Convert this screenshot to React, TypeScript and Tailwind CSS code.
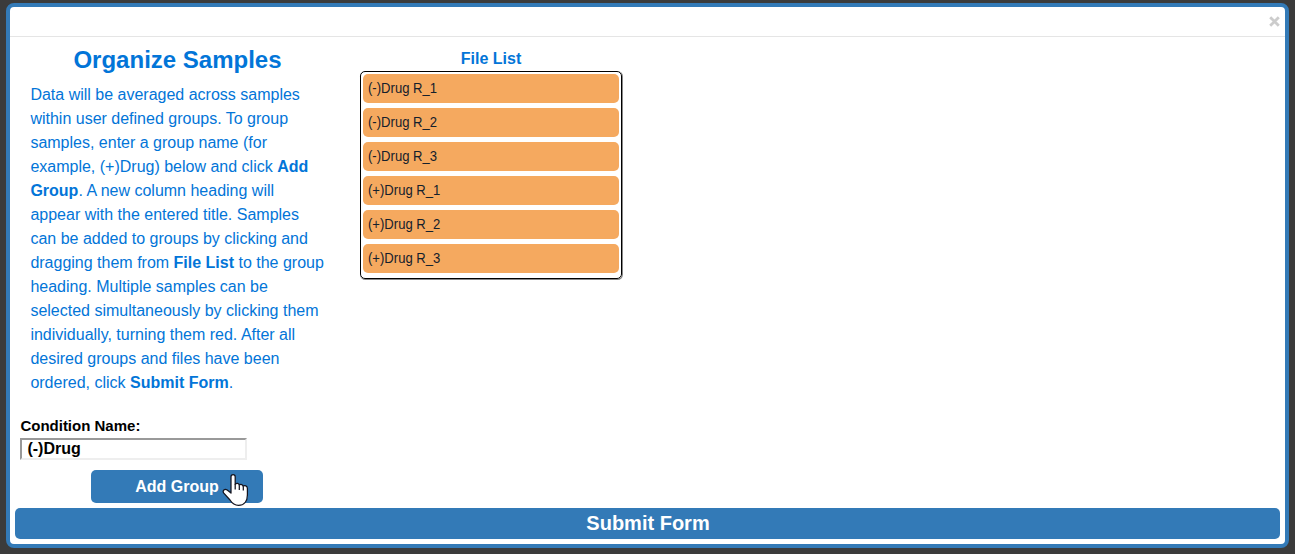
import React from "react";

const files = ["(-)Drug R_1", "(-)Drug R_2", "(-)Drug R_3", "(+)Drug R_1", "(+)Drug R_2", "(+)Drug R_3"];

function Instructions() {
  return (
    <section className="w-[330px] text-[#0275d8]">
      <h2 className="mt-[7px] pl-[13px] pr-2 text-center text-[24px] leading-8 font-bold">Organize Samples</h2>
      <p className="mt-[7px] pl-[20.4px] text-[16px] leading-6 whitespace-nowrap">
        Data will be averaged across samples<br />
        within user defined groups. To group<br />
        samples, enter a group name (for<br />
        example, (+)Drug) below and click <b>Add</b><br />
        <b>Group</b>. A new column heading will<br />
        appear with the entered title. Samples<br />
        can be added to groups by clicking and<br />
        dragging them from <b>File List</b> to the group<br />
        heading. Multiple samples can be<br />
        selected simultaneously by clicking them<br />
        individually, turning them red. After all<br />
        desired groups and files have been<br />
        ordered, click <b>Submit Form</b>.
      </p>
    </section>
  );
}

function FileList() {
  return (
    <section className="ml-[20px] w-[262px]">
      <h3 className="mt-[10px] text-center text-[16px] leading-6 font-bold text-[#0275d8]">File List</h3>
      <ul className="flex h-[208px] flex-col gap-[5px] rounded-[5px] border border-black p-[2px] shadow-[0.5px_0.5px_0_0.5px_#888]">
        {files.map((name) => (
          <li key={name} className="h-[29px] shrink-0 rounded-[5px] bg-[#f5a95f] pl-[5px] text-[14px] leading-[29px] text-[#14202c]">
            <span className="inline-block origin-left scale-x-[0.935]">{name}</span>
          </li>
        ))}
      </ul>
    </section>
  );
}

function HandCursor() {
  return (
    <svg className="absolute top-[3px] left-[131px]" width="28" height="34" viewBox="0 0 28 34" fill="white" stroke="#14141f" strokeWidth="1.25" strokeLinejoin="round">
      <path d="M9 19V3.8C9 .8 13.2.8 13.2 3.8V11.2C14.4 9.8 17.1 10.1 17.3 12.1C18.7 10.9 20.9 11.5 21.1 13.1C22.8 12.1 25.4 12.9 25.4 15.4V22C25.4 28.6 21.8 32.4 16.5 32.4C12.1 32.4 9.9 30 8 27L1.8 20.1C0 17.6 2.7 15.4 5.2 17L9 20.1Z" />
      <path d="M13.2 11V16.5M17.3 12.3V17M21.3 13.3V17.5" fill="none" />
    </svg>
  );
}

export default function App() {
  return (
    <main className="h-[554px] w-[1295px] overflow-hidden bg-[#3b3b3b] pt-[3px] pl-[6px] font-['Liberation_Sans',Arial,sans-serif]">
      <div className="flex h-[545px] w-[1283px] flex-col rounded-[8px] border-4 border-[#337ab7] bg-white">
        <header className="flex h-[30px] shrink-0 items-center justify-end border-b border-[#e5e5e5] pr-[5px] pb-[2px]">
          <button aria-label="Close">
            <svg className="mt-px block" width="11" height="11" viewBox="0 0 11 11" stroke="#cccccc" strokeWidth="2.8">
              <path d="M1.2 1.2L9.8 9.8M9.8 1.2L1.2 9.8" />
            </svg>
          </button>
        </header>
        <div className="flex h-[374px] shrink-0">
          <Instructions />
          <FileList />
        </div>
        <form className="flex flex-1 flex-col" onSubmit={(e) => e.preventDefault()}>
          <label htmlFor="condition" className="mt-[5px] ml-[10.4px] h-5 text-[15px] leading-5 font-bold text-black">Condition Name:</label>
          <input
            id="condition"
            defaultValue="(-)Drug"
            className="mt-[2px] ml-[10px] h-[22px] w-[227px] border-2 border-t-[#999] border-r-[#eee] border-b-[#eee] border-l-[#999] bg-white pl-[5.4px] text-[16px] leading-[18px] font-bold text-black"
          />
          <div className="relative mt-[10px] ml-[81px] w-[172px]">
            <button type="button" className="h-[33px] w-full rounded-[5px] bg-[#337ab7] text-[16px] leading-[33px] font-bold text-white">Add Group</button>
            <HandCursor />
          </div>
          <button type="submit" className="mt-[5px] ml-[5px] h-[31px] w-[1265px] rounded-[5px] bg-[#337ab7] pl-px text-[20px] leading-[31px] font-bold text-white">Submit Form</button>
        </form>
      </div>
    </main>
  );
}
